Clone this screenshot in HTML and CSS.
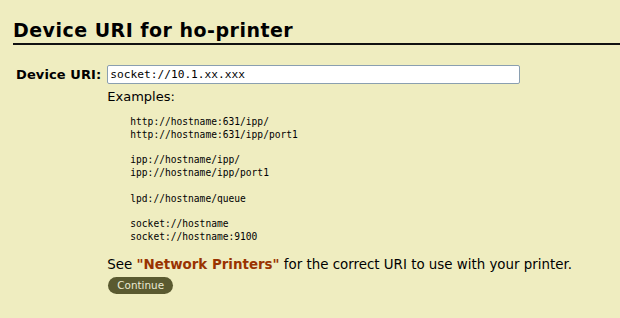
FILE: index.html
```html
<!DOCTYPE html>
<html lang="en">
  <head>
    <meta charset="UTF-8" />
    <title>Device URI for ho-printer</title>
    <link rel="stylesheet" href="styles.css">
  </head>

  <body>
    <h2 class="titulo">Device URI for ho-printer</h2>

    <form class="formulario">
      <table class="tabla">
        <tr>
          <th class="etiqueta"><label for="uri">Device URI:</label></th>
          <td>
            <input type="text" id="uri" name="DEVICE_URI" value="socket://10.1.xx.xxx" class="campo">
            <div class="ejemplos">
              <p>Examples:</p>
<pre>http://hostname:631/ipp/
http://hostname:631/ipp/port1

ipp://hostname/ipp/
ipp://hostname/ipp/port1

lpd://hostname/queue

socket://hostname
socket://hostname:9100</pre>
              <p class="nota">See <a href="#" class="enlace">"Network Printers"</a> for the correct URI to use with your printer.</p>
            </div>
            <button type="submit" class="boton">Continue</button>
          </td>
        </tr>
      </table>
    </form>
  </body>
</html>
```

FILE: styles.css
```css
body {
  margin: 0;
  padding: 0;
  background-color: #efedc0;
  font-family: "DejaVu Sans", sans-serif;
  font-size: 13px;
  color: #000;
}

.titulo {
  margin: 19px 0 0 13px;
  padding-bottom: 2px;
  font-size: 19px;
  letter-spacing: 0.48px;
  line-height: 22px;
  border-bottom: 2px solid #111;
}

.formulario {
  margin: 20px 0 0 16px;
}

.tabla {
  border-collapse: collapse;
}

.tabla td,
.tabla th {
  padding: 0;
  vertical-align: top;
}

.etiqueta {
  text-align: right;
  padding-right: 6px !important;
  padding-top: 2px !important;
  letter-spacing: 0.1px;
}

.campo {
  box-sizing: border-box;
  width: 413px;
  height: 19px;
  margin: 0;
  padding: 0 2px;
  border: 1px solid #8a9fb0;
  border-radius: 2px;
  background: #fff;
  font-family: "DejaVu Sans Mono", monospace;
  font-size: 11.2px;
  color: #000;
}

.ejemplos p {
  margin: 4px 0 0;
  line-height: 18px;
}

.ejemplos pre {
  margin: 10px 0 12px 23px;
  font-family: "DejaVu Sans Mono", monospace;
  font-size: 9.6px;
  line-height: 12.8px;
}

.ejemplos .nota {
  margin: 0;
  font-size: 13.4px;
}

.enlace {
  color: #993300;
  font-weight: bold;
  text-decoration: none;
}

.boton {
  margin: 3px 0 0 1px;
  padding: 1px 9px 2px;
  border: none;
  border-radius: 9px;
  background-color: #5a5a30;
  color: #ecebd4;
  font-family: "DejaVu Sans", sans-serif;
  font-size: 10.4px;
  line-height: 14px;
  cursor: pointer;
}
```
